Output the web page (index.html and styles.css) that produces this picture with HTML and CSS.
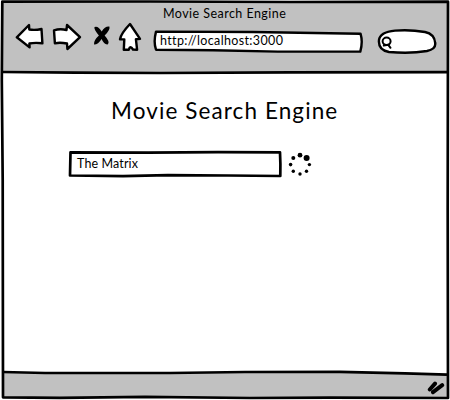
FILE: index.html
```
<!DOCTYPE html>
<html lang="en">
<head>
<meta charset="utf-8">
<title>Movie Search Engine</title>
<link rel="stylesheet" href="styles.css">
</head>
<body>
<div class="window">
  <svg class="frame" viewBox="0 0 450 400" aria-hidden="true">
    <path class="chrome" d="M2 2L448 2L448 72L160 73L3 72Z"/>
    <path class="chrome" d="M3 372.5L140 373L250 372L350 372L447 374.5L448 397.5L250 398L140 397L3 397.5Z"/>
    <path class="edge" d="M2.3 1.7L150 1.5L290 2L448 1.7L447.7 210L448 398L330 397.6L250 398L145 396.8L60 397.8L3 397.3L2.7 180L1.8 80Z"/>
    <path class="edge" d="M3 72L75 72.7L160 73L290 72.4L448 72.1M3 372L45 373L170 373L245 372L340 371.8L405 373.4L447 374.7"/>
  </svg>
  <header class="browser">
    <div class="tab-title"><span>Movie Search Engine</span></div>
    <nav class="toolbar">
      <svg class="back" viewBox="0 0 30 30"><path class="outline" d="M1.8 15.3L14 3L14.3 7.5Q20 8.5 26.5 7L27.4 21.3Q20 20.4 14.4 21.5L14.6 25.4Z"/></svg>
      <svg class="forward" viewBox="0 0 30 30"><path class="outline" d="M2 8.3Q8 6.5 14.5 8L15 3L28 15.2L15.4 27L15 21.5Q8 20.2 2.9 21.3Z"/></svg>
      <svg class="stop" viewBox="0 0 18 22"><path d="M1.5 2Q5 .4 8.7 6.4Q12 1 16.4 1.6Q17.6 5 11.6 10.5Q17.6 17 14.6 19.4Q11 19.8 8.6 14Q5 19.8 1 19.6Q.4 15.5 5.9 10.5Q.6 4 1.5 2Z"/></svg>
      <svg class="home" viewBox="0 0 26 30"><path class="outline" d="M13 2L23 16.8L18.9 17.2L20.1 27.7L16 27.5Q13.2 23 11.8 27.7L6.8 27.8L7.3 17.4L3 17.2Q4 11.5 13 2Z"/></svg>
      <div class="address">
        <svg class="sketch" viewBox="0 0 212 24"><path class="outline" d="M3 1.6L100 2L207.6 3.8Q210 12 207.3 21.6L125 21.6L60 20.3L3 19.7Q.3 12 3 1.6Z"/></svg>
        <span>http://localhost:3000</span>
      </div>
      <svg class="quick-search" viewBox="0 0 62 28"><path class="outline" d="M3 13Q4 5 19 3.6Q34 2.3 49 5Q58.5 7 59.2 16Q60 22 51 24Q34 27 13 25Q2 23 3 13Z"/><ellipse class="lens" cx="10.6" cy="14.3" rx="4" ry="3.7"/><path class="lens" d="M7.8 18.6L12.3 17.8L14.5 20.8"/></svg>
    </nav>
  </header>
  <main class="page">
    <h1><span>Movie Search Engine</span></h1>
    <div class="search-row">
      <div class="search-box">
        <svg class="sketch" viewBox="0 0 214 28"><path class="outline" d="M2.5 2.3L80 2.6L150 2.1L212 2.3L212.4 14L212.3 26L160 25.5L100 25.1L55 26.1L2 25.5Z"/></svg>
        <span>The Matrix</span>
      </div>
      <svg class="spinner" viewBox="0 0 26 26">
        <circle cx="13" cy="4.2" r="2.4"/><circle cx="19.6" cy="7" r="3"/><circle cx="22.4" cy="13.6" r="1.7"/><circle cx="19.5" cy="20.3" r="1.7"/><circle cx="13" cy="23" r="1.7"/><circle cx="6.3" cy="20.3" r="1.7"/><circle cx="3.6" cy="13.6" r="1.8"/><circle cx="6.3" cy="7" r="2"/>
      </svg>
    </div>
  </main>
  <footer class="status">
    <svg class="grip" viewBox="0 0 18 16"><path d="M2.8 10.5L8 4.6M6 13.2L15.2 6.2"/></svg>
  </footer>
</div>
</body>
</html>
```
FILE: styles.css
```
* { box-sizing: border-box; }
body { margin: 0; background: #fff; color: #000; font-family: Lato, "Open Sans", sans-serif; }
svg { display: block; flex: none; }
.window { position: relative; width: 450px; height: 400px; display: flex; flex-direction: column; overflow: hidden; }
.frame { position: absolute; inset: 0; width: 450px; height: 400px; z-index: -1; }
.chrome { fill: #c1c1c1; }
.edge { fill: none; stroke: #000; stroke-width: 2.7; stroke-linejoin: round; }
.outline { fill: #fff; stroke: #000; stroke-width: 2.4; stroke-linejoin: round; stroke-linecap: round; }
.browser { height: 74px; }
.tab-title { height: 22px; padding: 5px 0 0 163px; font-size: 12.5px; line-height: 17px; letter-spacing: 0.45px; white-space: nowrap; }
.toolbar { display: flex; align-items: flex-start; padding-left: 15px; }
.back { width: 30px; height: 30px; }
.forward { width: 30px; height: 30px; margin-left: 7px; }
.stop { width: 18px; height: 22px; margin: 3px 0 0 11px; }
.home { width: 26px; height: 30px; margin-left: 6px; }
.address { position: relative; width: 212px; height: 24px; margin: 8px 0 0 10px; padding: 2px 0 0 7px; font-size: 12.5px; line-height: 17px; letter-spacing: 0.36px; white-space: nowrap; }
.address span, .search-box span { position: relative; }
.sketch { position: absolute; inset: 0; width: 100%; height: 100%; }
.quick-search { width: 62px; height: 28px; margin: 5px 0 0 11px; }
.lens { fill: none; stroke: #000; stroke-width: 2; stroke-linecap: round; }
.page { flex: 1; }
h1 { margin: 0; padding: 21px 0 0 111px; font-size: 22.5px; font-weight: 400; line-height: 32px; letter-spacing: 1.1px; white-space: nowrap; }
.search-row { display: flex; margin: 23px 0 0 68px; }
.search-box { position: relative; width: 214px; height: 28px; padding: 5px 0 0 9px; font-size: 12.5px; line-height: 17px; letter-spacing: 0.12px; }
.search-box .outline { stroke-width: 2.7; }
.spinner { width: 26px; height: 26px; margin: 1px 0 0 5px; }
.status { height: 27px; display: flex; justify-content: flex-end; padding: 6px 5px 0 0; }
.grip { width: 18px; height: 16px; fill: none; stroke: #000; stroke-width: 4; stroke-linecap: round; }
```
